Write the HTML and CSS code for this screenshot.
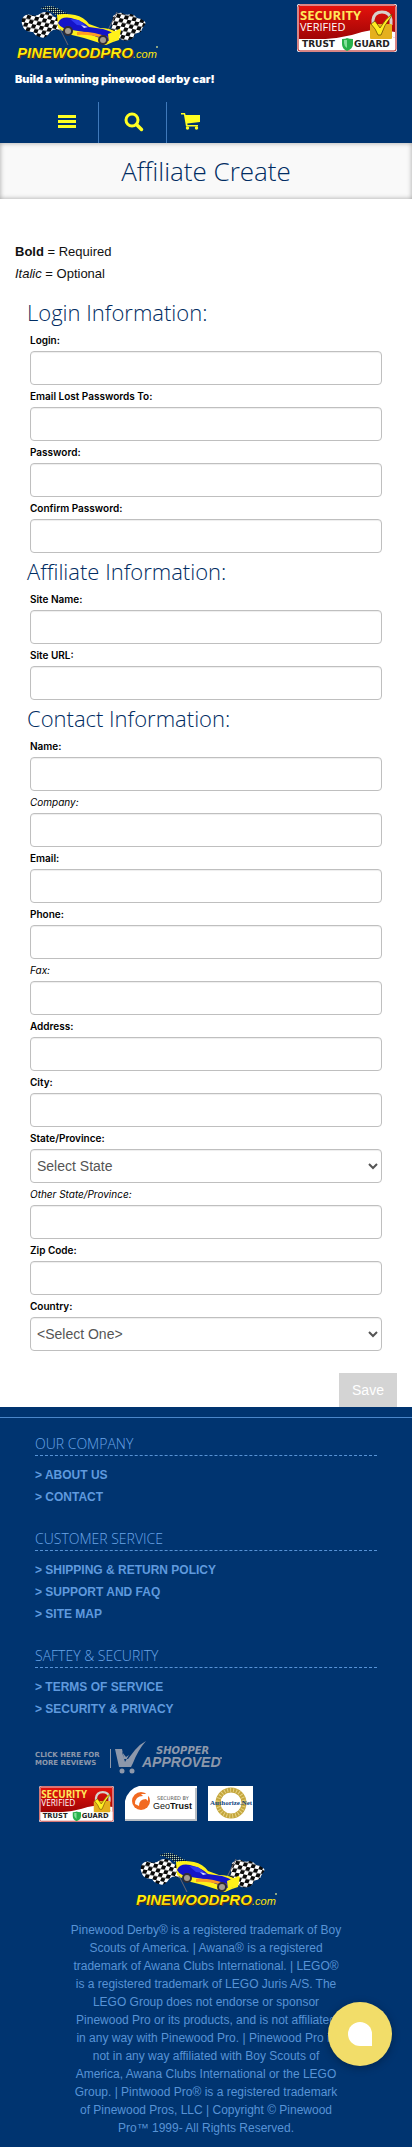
FILE: index.html
```
<!DOCTYPE html>
<html lang="en">
<head>
<meta charset="utf-8">
<meta name="viewport" content="width=device-width, initial-scale=1">
<title>Affiliate Create</title>
<link rel="stylesheet" href="styles.css">
</head>
<body>
<svg class="defs" aria-hidden="true">
  <defs>
    <linearGradient id="gold" x1="0" y1="0" x2="0" y2="1"><stop offset="0" stop-color="#fff200"/><stop offset=".6" stop-color="#ffee10"/><stop offset="1" stop-color="#e8a800"/></linearGradient>
    <linearGradient id="red" x1="0" y1="0" x2="0" y2="1"><stop offset="0" stop-color="#e3120c"/><stop offset="1" stop-color="#a00505"/></linearGradient>
    <pattern id="checks" width="8" height="8" patternUnits="userSpaceOnUse" patternTransform="rotate(12) skewX(-10)"><rect width="8" height="8" fill="#fff"/><rect width="4" height="4" fill="#0a0a0a"/><rect x="4" y="4" width="4" height="4" fill="#0a0a0a"/></pattern>
    <pattern id="dots" width="2" height="2" patternUnits="userSpaceOnUse"><rect width="1" height="1" fill="#d9d790"/><rect x="1" y="1" width="1" height="1" fill="#111"/></pattern>
    <symbol id="logo" viewBox="0 0 144 58">
      <path d="M25 4q10-4 17 0l11 6 4 4-12 0q-8-7-20-10z" fill="url(#dots)"/>
      <path d="M7 15q3-6 9-4 6 2 10-2 8-3 12 3 4 3 9 2l3 12q-4 1-8 0-4-2-9 5-3 4-8 2-5-1-7-5-8 0-10-5-2-4-1-8z" fill="url(#checks)"/>
      <path d="M98 12q5-4 9-3 4 3 9 1 4 1 6 4 4 0 7 3 3 2 0 5-2 2-3 6-4 1-6 2-1 5-6 6-5 2-10-2-4-2-9 0z" fill="url(#checks)"/>
      <path d="M45 25l8 16M87 38l15-30" stroke="#6b6670" stroke-width="1"/>
      <path d="M42 11q7-2 18 0 9 2 14 9l11 4q10 0 16 4l3-3 2 1-2 10-6 2-7 3-22-7-16-4-10-6z" fill="#fff21a"/>
      <path d="M43 19q3-7 13-5 12 3 18 9l14 2q8 2 12 6l-1 5q-5 2-9 0l-21-8-12-2q-11-1-14-7z" fill="#1414c8"/>
      <path d="M55 15l9 1 7 6-9-1z" fill="#2f38ef"/>
      <path d="M66 21l7 2-4 1z" fill="#d6d8ff"/>
      <path d="M62 28q15-1 31 5l-3 2q-14-5-28-4z" fill="#ff9b22"/>
      <path d="M93 30l12-5-4 10-7 4z" fill="#fff21a"/>
      <circle cx="53" cy="27" r="5" fill="#302d35"/><circle cx="53" cy="27" r="3" fill="#a39b91"/>
      <circle cx="88" cy="36" r="5" fill="#302d35"/><circle cx="88" cy="36" r="3" fill="#a39b91"/>
      <text x="3" y="55" class="logo-word logo-shade">PINEWOODPRO</text>
      <text x="2" y="54" class="logo-word" fill="url(#gold)">PINEWOODPRO</text>
      <text x="118" y="54" class="logo-com" fill="url(#gold)">.com</text>
      <circle cx="142" cy="43" r="1" fill="#b9c98b"/>
    </symbol>
    <symbol id="trust" viewBox="0 0 100 48">
      <rect width="100" height="48" rx="2" fill="#fff"/>
      <path d="M2 2h96v32q-14-8-31-6-20 8-40 7H2z" fill="url(#red)"/>
      <path d="M0 35q40 2 65-7 15-4 33 0v6q-14-7-31-3Q42 38 0 37z" fill="#fff"/>
      <rect x="1" y="1" width="98" height="46" rx="2" fill="none" stroke="#b00c0c"/>
      <text x="3" y="16" class="tg-security">SECURITY</text>
      <text x="3" y="27" class="tg-verified">VERIFIED</text>
      <path d="M76 21v-5q1-8 9-8t9 8v5" fill="none" stroke="#d7d2cd" stroke-width="3"/>
      <rect x="73" y="20" width="22" height="15" rx="1" fill="#e5b01d"/>
      <path d="M74 20l4-3 5 7q5-9 12-14l-1 3q-7 8-10 18h-3q-2-6-7-11z" fill="#ffee22" stroke="#5c4000" stroke-width=".7"/>
      <text x="5" y="43" class="tg-name">TRUST</text>
      <path d="M45 35q4 0 5-1 2 1 6 1v5q0 5-6 7-5-2-5-7z" fill="#28b24c"/><path d="M47 36h3v8q-3-2-3-5z" fill="#84e09b"/>
      <text x="57" y="43" class="tg-name">GUARD</text>
    </symbol>
  </defs>
</svg>

<header class="site-header">
  <div class="brand-row">
    <a href="#" aria-label="PinewoodPro.com home"><svg class="logo"><use href="#logo"/></svg></a>
    <a href="#" aria-label="Trust Guard security verified"><svg class="seal"><use href="#trust"/></svg></a>
  </div>
  <p class="tagline">Build a winning pinewood derby car!</p>
  <nav class="nav">
    <button class="nav-item nav-menu" type="button" aria-label="Menu"><svg width="18" height="16" viewBox="0 0 18 16"><path d="M0 1h18v3H0zM0 6h18v3H0zM0 11h18v3H0z" fill="currentColor"/></svg></button>
    <button class="nav-item nav-search" type="button" aria-label="Search"><svg width="20" height="20" viewBox="0 0 20 20"><circle cx="8" cy="8" r="6" fill="none" stroke="currentColor" stroke-width="3"/><path d="M12.500 12.500l5 5" stroke="currentColor" stroke-width="3.500" stroke-linecap="round"/></svg></button>
    <a class="nav-item nav-cart" href="#" aria-label="Cart"><svg width="20" height="18" viewBox="0 0 20 18"><path d="M0 1h4l.6 2H19v7L6.300 11.500l.2 1.500H17v1.500H5L2.900 2.500H0z" fill="currentColor"/><circle cx="6.500" cy="16" r="1.700" fill="currentColor"/><circle cx="15.500" cy="16" r="1.700" fill="currentColor"/></svg></a>
  </nav>
</header>

<main>
  <h1 class="page-title">Affiliate Create</h1>
  <p class="legend"><b>Bold</b> = Required<br><i>Italic</i> = Optional</p>
  <form class="form">
    <h2>Login Information:</h2>
    <label for="login">Login:</label><input id="login" type="text" required>
    <label for="lost">Email Lost Passwords To:</label><input id="lost" type="email" required>
    <label for="pw">Password:</label><input id="pw" type="password" required>
    <label for="pw2">Confirm Password:</label><input id="pw2" type="password" required>
    <h2>Affiliate Information:</h2>
    <label for="site">Site Name:</label><input id="site" type="text" required>
    <label for="url">Site URL:</label><input id="url" type="text" required>
    <h2>Contact Information:</h2>
    <label for="name">Name:</label><input id="name" type="text" required>
    <label class="optional" for="company">Company:</label><input id="company" type="text">
    <label for="email">Email:</label><input id="email" type="email" required>
    <label for="phone">Phone:</label><input id="phone" type="tel" required>
    <label class="optional" for="fax">Fax:</label><input id="fax" type="tel">
    <label for="address">Address:</label><input id="address" type="text" required>
    <label for="city">City:</label><input id="city" type="text" required>
    <label for="state">State/Province:</label><select id="state"><option>Select State</option></select>
    <label class="optional" for="other">Other State/Province:</label><input id="other" type="text">
    <label for="zip">Zip Code:</label><input id="zip" type="text" required>
    <label for="country">Country:</label><select id="country"><option>&lt;Select One&gt;</option></select>
    <button class="save" type="submit">Save</button>
  </form>
</main>

<footer class="site-footer">
  <div class="footer-links">
    <section><h3>OUR COMPANY</h3><ul><li><a href="#">&gt; ABOUT US</a></li><li><a href="#">&gt; CONTACT</a></li></ul></section>
    <section><h3>CUSTOMER SERVICE</h3><ul><li><a href="#">&gt; SHIPPING &amp; RETURN POLICY</a></li><li><a href="#">&gt; SUPPORT AND FAQ</a></li><li><a href="#">&gt; SITE MAP</a></li></ul></section>
    <section><h3>SAFTEY &amp; SECURITY</h3><ul><li><a href="#">&gt; TERMS OF SERVICE</a></li><li><a href="#">&gt; SECURITY &amp; PRIVACY</a></li></ul></section>
    <a class="shopper" href="#" aria-label="Shopper Approved reviews">
      <svg width="188" height="34" viewBox="0 0 188 34" fill="#8d98ab">
        <text x="0" y="16" class="sa-small">CLICK HERE FOR</text>
        <text x="0" y="24" class="sa-small">MORE REVIEWS</text>
        <path d="M75 8h1v19h-1z"/>
        <path d="M80 8h7l2 10h4l7-9q5-6 11-9-8 9-13 22l-2 4H84zM87 11l3 10 4-7-3 2z" fill-rule="evenodd"/>
        <circle cx="87" cy="30" r="2.500"/><circle cx="97" cy="30" r="2.500"/>
        <text x="121" y="13" class="sa-top">SHOPPER</text>
        <text x="107" y="26" class="sa-big">APPROVED</text>
        <circle cx="186" cy="17" r="1"/>
      </svg>
    </a>
    <div class="badges">
      <a href="#" aria-label="Trust Guard security verified"><svg width="75" height="36"><use href="#trust"/></svg></a>
      <a href="#" aria-label="Secured by GeoTrust"><svg width="72" height="35" viewBox="0 0 72 35">
        <path d="M14 0h58v35H0V15Q3 3 14 0z" fill="#fff"/><path d="M0 33h70V2h2v33H0z" fill="#b9bec4"/>
        <circle cx="16" cy="15" r="9" fill="#f26a21"/><path d="M10 18q0-8 8-8l-2-2h7v7l-2-2q-7 0-7 7z" fill="#fff"/>
        <text x="32" y="14" class="geo-small">SECURED BY</text>
        <text x="28" y="23" class="geo">Geo<tspan class="geo-bold">Trust</tspan></text>
      </svg></a>
      <a href="#" aria-label="Authorize.Net"><svg width="45" height="35" viewBox="0 0 45 35">
        <rect width="45" height="35" fill="#fff"/><circle cx="23" cy="17" r="13" fill="none" stroke="#c4a63c" stroke-width="5"/><circle cx="23" cy="17" r="13" fill="none" stroke="#e5d184" stroke-width="4" stroke-dasharray="1 2"/>
        <text x="2" y="19" class="auth">Authorize.Net</text>
      </svg></a>
    </div>
  </div>
  <div class="legal">
    <svg class="logo" role="img" aria-label="PinewoodPro.com"><use href="#logo"/></svg>
    <p>Pinewood Derby® is a registered trademark of Boy Scouts of America. | Awana® is a registered trademark of Awana Clubs International. | LEGO® is a registered trademark of LEGO Juris A/S. The LEGO Group does not endorse or sponsor Pinewood Pro or its products, and is not affiliated in any way with Pinewood Pro. | Pinewood Pro is not in any way affiliated with Boy Scouts of America, Awana Clubs International or the LEGO Group. | Pintwood Pro® is a registered trademark of Pinewood Pros, LLC | Copyright © Pinewood Pro™ 1999- All Rights Reserved.</p>
  </div>
</footer>
<button class="chat" type="button" aria-label="Chat"><svg width="24" height="24" viewBox="0 0 24 24"><path d="M12 0a12 12 0 0 1 12 12v12H12a12 12 0 0 1 0-24z" fill="#fff"/></svg></button>
</body>
</html>
```
FILE: styles.css
```
* { box-sizing: border-box; }
body { margin: 0; background: #fff; color: #111; font: 13px/22px "Liberation Sans", Arial, sans-serif; }
h1, h2, h3, p, ul { margin: 0; padding: 0; font-weight: 400; }
ul { list-style: none; }
svg { display: block; }
button { font: inherit; border: 0; padding: 0; cursor: pointer; }
.defs { position: absolute; width: 0; height: 0; }

.site-header { background: #003470; color: #fff; }
.brand-row { display: flex; justify-content: space-between; padding: 4px 15px 0; height: 68px; }
.logo { width: 144px; height: 58px; }
.seal { width: 100px; height: 48px; }
.logo-word { font: italic bold 15px "Liberation Sans", sans-serif; }
.logo-shade { fill: #5a2a08; }
.logo-com { font: italic 11px "Liberation Sans", sans-serif; }
.tg-security { font: bold 13px "Open Sans", sans-serif; fill: #ffe95c; }
.tg-verified { font: 11px "Open Sans", sans-serif; fill: #fff; }
.tg-name { font: bold 9px "DejaVu Sans", sans-serif; fill: #222; }
.tagline { padding: 0 15px; font: 900 11px/22px Inter, sans-serif; }
.nav { display: flex; margin: 12px 0 0 36px; height: 41px; }
.nav-item { display: flex; align-items: center; justify-content: center; padding-bottom: 1px; background: none; color: #ffff22; border-right: 1px solid #3f79bb; }
.nav-menu { width: 63px; }
.nav-search { width: 68px; padding-left: 3px; }
.nav-cart { width: 48px; padding-bottom: 3px; border-right: 0; }

.page-title { height: 56px; background: #f9f9f9; color: #002c62; font: 300 26px/56px "Open Sans", sans-serif; text-align: center; box-shadow: inset 0 0 5px rgba(0, 0, 0, .35); }
.legend { padding: 42px 15px 0; }
.form { display: flex; flex-direction: column; padding: 9px 30px 0; }
.form h2 { margin-left: -3px; color: #002c62; font: 300 22px/37px "Open Sans", sans-serif; height: 35px; }
.form label { font: 600 10px/22px Inter, sans-serif; color: #000; }
.form .optional { font-weight: 400; font-style: italic; }
.form input, .form select { width: 100%; height: 34px; border: 1px solid #bfbfbf; border-radius: 4px; background: #fff; color: #555; font: 14px "Liberation Sans", sans-serif; padding: 6px; box-shadow: inset 0 1px 1px rgba(0, 0, 0, .07); }
.form select { padding: 6px 2px; }
.form .save { align-self: flex-end; margin: 22px -15px 0 0; width: 58px; height: 34px; background: #d4d4d4; color: #fff; font-size: 14px; }

.site-footer { background: #003470; color: #5793d6; padding-top: 10px; }
.footer-links { border-top: 1px solid #4a86ca; padding: 15px 35px 0; }
.footer-links section { margin-bottom: 20px; }
.footer-links h3 { color: #6ba6e8; font: 300 14px/22px "Open Sans", sans-serif; border-bottom: 1px dashed #5793d6; margin-bottom: 8px; }
.footer-links li a { color: #5f9ade; font-size: 12px; font-weight: bold; text-decoration: none; }
.shopper { display: block; width: 188px; margin-top: 21px; }
.sa-small { font: bold 7px "DejaVu Sans", sans-serif; }
.sa-top { font: italic bold 10px "DejaVu Sans", sans-serif; }
.sa-big { font: italic bold 14px "Liberation Sans", sans-serif; }
.badges { display: flex; gap: 11px; padding: 11px 4px 0; }
.geo-small { font: 5px "DejaVu Sans", sans-serif; fill: #555; }
.geo { font: 9px "Liberation Sans", sans-serif; fill: #111; }
.geo-bold { font-weight: bold; }
.auth { font: bold 7px "Liberation Serif", serif; fill: #15477f; }
.legal { display: flex; flex-direction: column; align-items: center; padding: 29px 69px 10px; text-align: center; font-size: 12px; line-height: 18px; }
.legal p { margin-top: 12px; padding: 0 1px; }
.chat { position: fixed; right: 20px; bottom: 81px; width: 64px; height: 64px; border-radius: 50%; background: #f2dd69; display: flex; align-items: center; justify-content: center; box-shadow: 0 2px 8px rgba(0, 0, 0, .3); }
```
